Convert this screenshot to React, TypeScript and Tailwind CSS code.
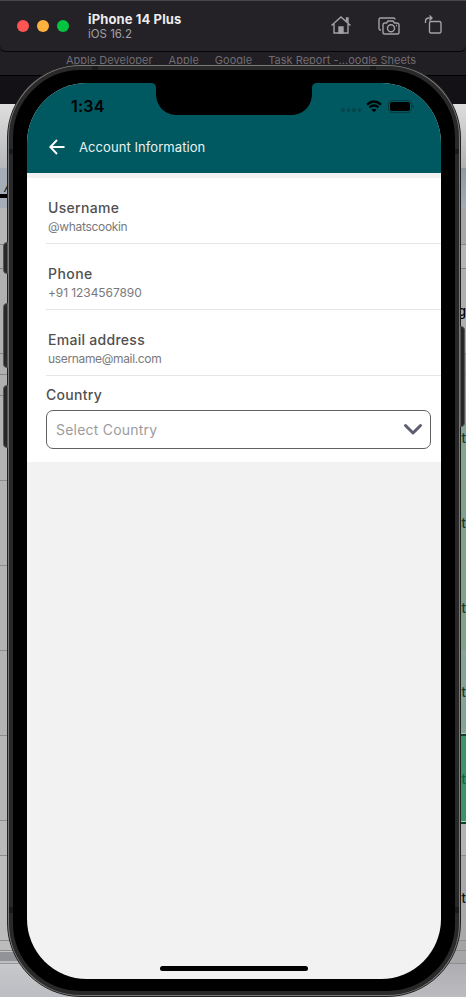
import type { ReactNode } from "react";

type Band = { h: number; tone: string; text?: string };

const leftBands: Band[] = [
  { h: 64, tone: "bg-linear-to-b from-[#dededf] to-[#b8b9bb]" },
  { h: 26, tone: "bg-[#a5adb9]", text: "A" },
  { h: 4, tone: "bg-black" },
  { h: 10, tone: "bg-[#a5adb9]" },
  { h: 37, tone: "bg-[#b7b7b7] border-b border-[#858585]" },
  { h: 24, tone: "bg-[#b0b0b0] border-b border-[#858585]" },
  { h: 85, tone: "bg-[#b0b0b0] border-b border-[#858585]" },
  { h: 21, tone: "bg-[#b0b0b0] border-b border-[#858585]" },
  { h: 21, tone: "bg-[#b0b0b0] border-b border-[#858585]" },
  { h: 85, tone: "bg-[#b3b3b3] border-b border-[#8d8d8d]" },
  { h: 85, tone: "bg-[#b3b3b3] border-b border-[#8d8d8d]" },
  { h: 85, tone: "bg-[#b3b3b3] border-b border-[#8d8d8d]" },
  { h: 85, tone: "bg-[#b3b3b3] border-b border-[#8d8d8d]" },
  { h: 85, tone: "bg-[#b6b6b6] border-b border-[#8d8d8d]" },
  { h: 35, tone: "bg-[#b9b9b9] border-b border-[#8d8d8d]" },
  { h: 85, tone: "bg-[#bcbcbc] border-b border-[#8d8d8d]" },
  { h: 10, tone: "bg-[#bcbcbc] border-b border-[#8d8d8d]" },
  { h: 1, tone: "bg-[#c5c5c5]" },
  { h: 9, tone: "bg-[#929398]" },
  { h: 3, tone: "bg-[#bdbec0] border-b border-[#999]" },
  { h: 34, tone: "bg-linear-to-b from-[#c7c8cb] to-[#bcbdc2]" },
];

const rightBands: Band[] = [
  { h: 64, tone: "bg-linear-to-b from-[#dedede] to-[#b1b1b1]" },
  { h: 40, tone: "bg-linear-to-b from-[#9299a5] to-[#a5abb5]" },
  { h: 37, tone: "bg-[#a8a6a4] border-b border-[#858585]" },
  { h: 24, tone: "bg-[#b5b5b5] border-b border-[#858585]" },
  { h: 85, tone: "bg-[#b0afaf] border-b border-[#858585] text-black", text: "g" },
  { h: 21, tone: "bg-[#999] border-b border-[#858585]" },
  { h: 21, tone: "bg-[#999]" },
  { h: 85, tone: "bg-[#82a491] border-b border-[#929d93] text-[#173a28]", text: "t" },
  { h: 85, tone: "bg-[#7fa18e] border-b border-[#929d93] text-[#173a28]", text: "at" },
  { h: 85, tone: "bg-[#7fa18e] border-b border-[#929d93] text-[#173a28]", text: "at" },
  { h: 83, tone: "bg-[#86a695] border-b border-[#b3c0b5] text-[#173a28]", text: "at" },
  { h: 2, tone: "bg-[#07442a]" },
  { h: 85, tone: "bg-[#3c946a] text-[#11633b]", text: "at" },
  { h: 3, tone: "bg-[#07442a] border-t border-[#b6c9bd]" },
  { h: 32, tone: "bg-[#b3b3b5] border-b border-[#8d8d8d]" },
  { h: 85, tone: "bg-[#a9a9ab] border-b border-[#8d8d8d] text-[#111]", text: "at" },
  { h: 10, tone: "bg-[#a4a4a6] border-b border-[#8d8d8d]" },
  { h: 13, tone: "bg-[#a6a6a8] border-b border-[#8d8d8d]" },
  { h: 34, tone: "bg-linear-to-b from-[#aeaeb2] to-[#bcbcc0]" },
];

function LeftStrip() {
  return (
    <div className="flex w-20 flex-col overflow-hidden">
      {leftBands.map((b, i) => (
        <div
          key={i}
          className={`flex shrink-0 items-end pl-[4px] text-[13px] leading-[14px] text-[#1c1f26] italic ${b.tone}`}
          style={{ height: b.h }}
        >
          {b.text}
        </div>
      ))}
    </div>
  );
}

function RightStrip() {
  return (
    <div className="flex w-20 flex-col">
      {rightBands.map((b, i) => (
        <div
          key={i}
          className={`flex shrink-0 items-center justify-end text-[13px] leading-none font-medium ${b.tone}`}
          style={{ height: b.h }}
        >
          {b.text && <span className="pt-px">{b.text}</span>}
        </div>
      ))}
    </div>
  );
}

function Toolbar() {
  return (
    <header className="flex h-[52px] shrink-0 items-center rounded-b-md border-t border-b border-t-[#47454b] border-b-[#050507] bg-[#242127] pl-[17px]">
      <div className="flex gap-2">
        <i className="size-3 rounded-full bg-[#ff5454]" />
        <i className="size-3 rounded-full bg-[#ffb13e]" />
        <i className="size-3 rounded-full bg-[#05c441]" />
      </div>
      <div className="ml-[19px] w-60 pt-px">
        <h1 className="text-[13px] leading-[15px] font-bold tracking-[0.120px] text-[#edebed]">iPhone 14 Plus</h1>
        <p className="text-[11.5px] leading-[14px] text-[#a3a0a6]">iOS 16.2</p>
      </div>
      <svg width="22" height="22" viewBox="0 0 22 22" fill="none" stroke="#a4a1a6" strokeWidth="1.4" className="-mt-[3px] ml-[2px]">
        <path d="M1.500 11.500 11 3l9.500 8.500M4 10v9h14v-9M16.500 7.500V4h1.500v5" />
        <path d="M9 19v-6h4v6z" fill="#a4a1a6" />
      </svg>
      <svg width="24" height="22" viewBox="0 0 24 22" fill="none" stroke="#a4a1a6" strokeWidth="1.4" className="-mt-px ml-[25px]">
        <path d="M4 15H3.500Q2 15 2 13.500V4.500Q2 3 3.500 3h13Q18 3 18 4.500" />
        <path d="M7.500 8h2l1.500-2h5l1.500 2h2Q22 8 22 9.800v7.400Q22 19 20.200 19H7.800Q6 19 6 17.200V9.800Q6 8 7.500 8z" />
        <circle cx="14" cy="13.200" r="3.500" />
        <path d="M19 10.500h1" />
      </svg>
      <svg width="20" height="22" viewBox="0 0 20 22" fill="none" stroke="#a4a1a6" strokeWidth="1.4" className="-mt-[3px] ml-[23px]">
        <rect x="5.500" y="7.500" width="11.500" height="11.500" rx="1.500" />
        <path d="M1.500 9V7.500Q1.500 4 5 4h2.500M5.500 1.500 8 4 5.500 6.500" />
      </svg>
    </header>
  );
}

function StatusBar() {
  return (
    <div className="relative h-12">
      <svg className="absolute top-0 left-[125px]" width="164" height="32" viewBox="0 0 164 32">
        <path d="M0 0Q4 .5 4 5v5C4 24 13 32 26 32h112c13 0 22-8 22-22V5q0-4.500 4-5z" />
      </svg>
      <div className="flex items-center pt-[13px] pl-[44px] text-black">
        <span className="w-[270px] text-[16px] leading-5 font-semibold tracking-[0.200px]">1:34</span>
        <div className="mt-2 flex gap-[2px]">
          <i className="size-[3.500px] rounded-full bg-[#05454c]" />
          <i className="size-[3.500px] rounded-full bg-[#05454c]" />
          <i className="size-[3.500px] rounded-full bg-[#05454c]" />
          <i className="size-[3.500px] rounded-full bg-[#05454c]" />
        </div>
        <svg className="ml-[5px]" width="16" height="13" viewBox="0 0 16 13" fill="none" stroke="#000" strokeWidth="2.300">
          <path d="M1 4.600Q8-1.500 15 4.600M3.500 7.400Q8 3.300 12.500 7.400" />
          <path d="M5.500 9.700Q8 7.700 10.500 9.700L8 12.200z" fill="#000" stroke="none" />
        </svg>
        <svg className="ml-[6px]" width="26" height="13" viewBox="0 0 26 13">
          <rect x=".5" y=".5" width="23" height="12" rx="3.500" fill="none" stroke="#033d42" />
          <rect x="2" y="2" width="20" height="9" rx="2" />
          <path d="M24.500 4.500q1.500.5 1.500 2t-1.500 2z" fill="#033d42" />
        </svg>
      </div>
    </div>
  );
}

function Label({ children }: { children: ReactNode }) {
  return <span className="block text-[14px] leading-[18px] font-medium text-[#505052]">{children}</span>;
}

function Field({ label, value, space, valueSpace }: { label: string; value: string; space: string; valueSpace: string }) {
  return (
    <div className="ml-[19px] h-[66px] border-b border-[#e5e5e5] pt-[21px] pl-[2px]">
      <Label>
        <span className={space}>{label}</span>
      </Label>
      <p className={`pt-px text-[12px] leading-[17px] text-[#79797b] ${valueSpace}`}>{value}</p>
    </div>
  );
}

function Phone() {
  return (
    <div className="absolute top-[64px] left-[7px] h-[933px] w-[454px] rounded-[74px] border border-[#222] bg-[#797979] p-px">
      <div className="h-full rounded-[72px] border-4 border-[#292929] bg-black px-[14px] pt-[13px] pb-[13px]">
        <div className="relative flex h-[896px] w-[414px] flex-col overflow-hidden rounded-[60px] bg-[#f2f2f2]">
          <header className="h-[90px] shrink-0 bg-[#005960]">
            <StatusBar />
            <div className="flex h-8 items-center pl-[22px] text-white">
              <svg width="16" height="16" viewBox="0 0 16 16" fill="none" stroke="white" strokeWidth="1.900">
                <path d="M15.500 8H1.500M8 1 1.300 8 8 15" />
              </svg>
              <h2 className="ml-[14px] text-[13px] leading-5 tracking-[0.070px] text-[#e8f1f1]">Account Information</h2>
            </div>
          </header>
          <main className="mt-[5px] h-[284px] shrink-0 bg-white">
            <Field label="Username" value="@whatscookin" space="tracking-[0.300px]" valueSpace="tracking-[-0.320px]" />
            <Field label="Phone" value="+91 1234567890" space="tracking-[0.450px]" valueSpace="tracking-[-0.080px]" />
            <Field label="Email address" value="username@mail.com" space="tracking-[0.280px]" valueSpace="tracking-[-0.340px]" />
            <div className="pt-[10px] pr-[10px] pl-[19px]">
              <Label>
                <span className="tracking-[0.300px]">Country</span>
              </Label>
              <div className="mt-[6px] flex h-[39px] items-center justify-between rounded-[7px] border border-[#626262] pr-[7px] pl-[9px]">
                <span className="text-[14px] tracking-[0.220px] text-[#9c9c9c]">Select Country</span>
                <svg width="20" height="13" viewBox="0 0 20 13" fill="none" stroke="#5d5d70" strokeWidth="3" strokeLinecap="round" strokeLinejoin="round">
                  <path d="m2.500 2.500 7.500 7.500 7.500-7.500" />
                </svg>
              </div>
            </div>
          </main>
          <div className="mx-auto mt-auto mb-[8px] h-[5px] w-[148px] rounded-full bg-black" />
        </div>
      </div>
      <i className="absolute top-[84px] left-px h-[5px] w-[4px] bg-[#1a1a1a]" />
      <i className="absolute top-[84px] right-px h-[5px] w-[4px] bg-[#1a1a1a]" />
      <i className="absolute top-[842px] left-px h-[6px] w-[4px] bg-[#1a1a1a]" />
      <i className="absolute top-[842px] right-px h-[6px] w-[4px] bg-[#1a1a1a]" />
      <i className="absolute top-px left-[84px] h-[4px] w-[6px] bg-[#1a1a1a]" />
      <i className="absolute top-px right-[84px] h-[4px] w-[6px] bg-[#1a1a1a]" />
      <i className="absolute top-[177px] -left-[5px] h-[32px] w-[5px] rounded-l-sm border border-[#555] bg-[#272727]" />
      <i className="absolute top-[238px] -left-[5px] h-[65px] w-[5px] rounded-l-sm border border-[#555] bg-[#272727]" />
      <i className="absolute top-[320px] -left-[5px] h-[63px] w-[5px] rounded-l-sm border border-[#555] bg-[#272727]" />
      <i className="absolute top-[261px] -right-[5px] h-[101px] w-[5px] rounded-r-sm border border-[#555] bg-[#272727]" />
    </div>
  );
}

export default function App() {
  return (
    <div className="relative flex h-[997px] w-[466px] flex-col overflow-hidden bg-[#1d1a20] font-['Inter','Noto_Sans',sans-serif]">
      <Toolbar />
      <nav className="flex h-[24px] shrink-0 gap-[16px] border-b border-black bg-[#211e24] pl-[66px] text-[11px] leading-4 tracking-[0.020px] whitespace-nowrap text-[#706d73]">
        <span>Apple Developer</span>
        <span>Apple</span>
        <span>Google</span>
        <span>Task Report -...oogle Sheets</span>
      </nav>
      <div className="h-7 shrink-0 bg-[#131116]" />
      <div className="flex grow justify-between bg-[#aaa]">
        <LeftStrip />
        <RightStrip />
      </div>
      <Phone />
    </div>
  );
}
